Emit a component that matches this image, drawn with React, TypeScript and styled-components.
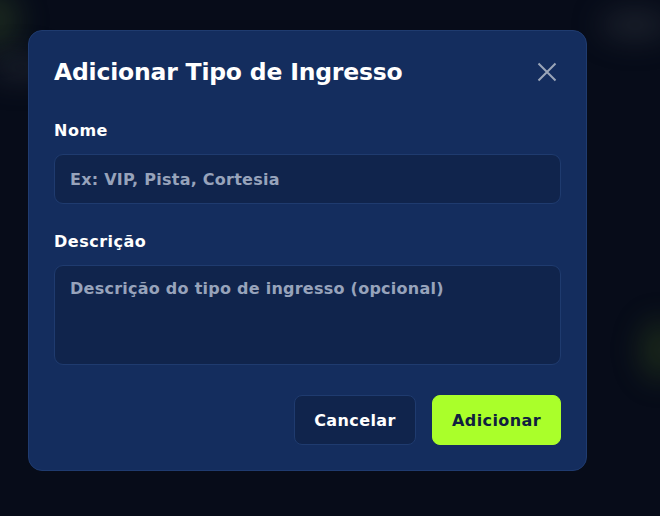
import React from "react";
import styled, { createGlobalStyle } from "styled-components";

const FONT = `"DejaVu Sans", "Open Sans", "Liberation Sans", sans-serif`;

const Global = createGlobalStyle`
  html, body { margin: 0; padding: 0; }
  body {
    background: #070c19;
    font-family: ${FONT};
    width: 660px;
    height: 516px;
    overflow: hidden;
  }
  * { box-sizing: border-box; }
`;

const Page = styled.div`
  position: relative;
  width: 660px;
  height: 516px;
  background: #070c19;
  overflow: hidden;
  padding: 30px 0 0 28px;
`;

const Glow = styled.div<{ $x: number; $y: number; $w: number; $h: number; $c: string }>`
  position: absolute;
  left: ${(p) => p.$x}px;
  top: ${(p) => p.$y}px;
  width: ${(p) => p.$w}px;
  height: ${(p) => p.$h}px;
  background: ${(p) => p.$c};
  border-radius: 50%;
  filter: blur(14px);
`;

const Modal = styled.div`
  position: relative;
  width: 559px;
  height: 441px;
  background: #142d5e;
  border: 1px solid #1f3b6f;
  border-radius: 14px;
  padding: 25px;
  display: flex;
  flex-direction: column;
`;

const Header = styled.div`
  display: flex;
  align-items: center;
  justify-content: space-between;
  height: 34px;
`;

const Title = styled.h2`
  margin: 0;
  font-size: 23.5px;
  font-weight: 700;
  color: #ffffff;
  letter-spacing: -0.2px;
`;

const Close = styled.button`
  background: none;
  border: none;
  padding: 0;
  width: 24px;
  height: 24px;
  display: flex;
  align-items: center;
  justify-content: center;
  color: #9ba6b9;
  margin-right: 2px;
`;

const Field = styled.div<{ $top: number }>`
  display: flex;
  flex-direction: column;
  gap: 13px;
  margin-top: ${(p) => p.$top}px;
`;

const Label = styled.label`
  font-size: 16px;
  font-weight: 700;
  color: #ffffff;
  line-height: 20px;
  letter-spacing: 0.5px;
`;

const inputBase = `
  width: 100%;
  background: #10244c;
  border: 1px solid #1f3b6f;
  border-radius: 9px;
  font-family: ${FONT};
  font-size: 16px;
  font-weight: 700;
  letter-spacing: 0.25px;
  color: #ffffff;
  padding: 0 15px;
  outline: none;
  &::placeholder { color: #97a3bb; }
`;

const Input = styled.input`
  ${inputBase}
  height: 50px;
`;

const TextArea = styled.textarea`
  ${inputBase}
  height: 100px;
  padding-top: 12px;
  resize: none;
  line-height: 22px;
`;

const Actions = styled.div`
  display: flex;
  justify-content: flex-end;
  gap: 16px;
  margin-top: 30px;
`;

const Button = styled.button<{ $primary?: boolean }>`
  height: 50px;
  padding: 0;
  border-radius: 8px;
  font-family: ${FONT};
  font-size: 16px;
  font-weight: 700;
  letter-spacing: 0.4px;
  border: 1px solid ${(p) => (p.$primary ? "#aaff2a" : "#1f3b6f")};
  background: ${(p) => (p.$primary ? "#aaff2a" : "#10244c")};
  color: ${(p) => (p.$primary ? "#10203f" : "#ffffff")};
  width: ${(p) => (p.$primary ? 129 : 122)}px;
`;

export default function App() {
  return (
    <>
      <Global />
      <Page>
        <Glow $x={-30} $y={-10} $w={50} $h={60} $c="rgba(60,90,40,0.35)" />
        <Glow $x={-10} $y={55} $w={60} $h={25} $c="rgba(40,45,55,0.6)" />
        <Glow $x={600} $y={10} $w={70} $h={30} $c="rgba(40,45,55,0.6)" />
        <Glow $x={640} $y={320} $w={40} $h={60} $c="rgba(60,90,30,0.35)" />
        <Modal>
          <Header>
            <Title>Adicionar Tipo de Ingresso</Title>
            <Close aria-label="Fechar">
              <svg width="24" height="24" viewBox="0 0 24 24" fill="none" stroke="currentColor" strokeWidth="2">
                <path d="M3.5 3.5L20.5 20.5M20.5 3.5L3.5 20.5" />
              </svg>
            </Close>
          </Header>
          <Field $top={34}>
            <Label>Nome</Label>
            <Input placeholder="Ex: VIP, Pista, Cortesia" />
          </Field>
          <Field $top={28}>
            <Label>Descrição</Label>
            <TextArea placeholder="Descrição do tipo de ingresso (opcional)" />
          </Field>
          <Actions>
            <Button>Cancelar</Button>
            <Button $primary>Adicionar</Button>
          </Actions>
        </Modal>
      </Page>
    </>
  );
}
